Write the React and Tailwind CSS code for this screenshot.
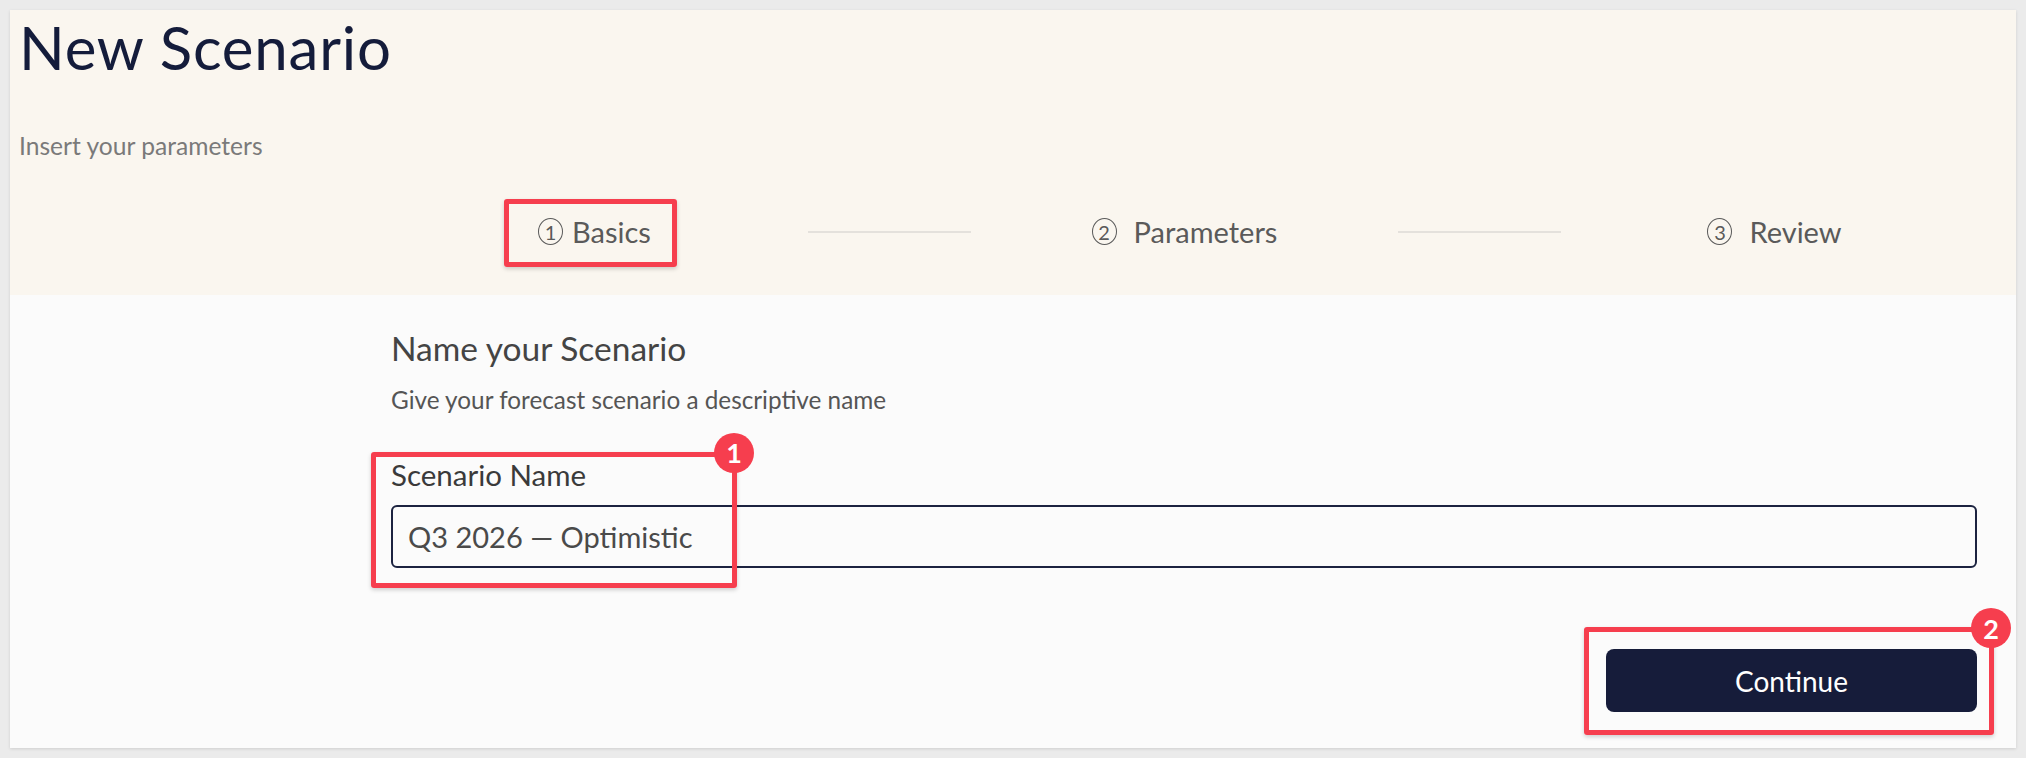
import React, { useState } from 'react';

const steps = [
  { num: '1', label: 'Basics', gap: 'ml-[9px]' },
  { num: '2', label: 'Parameters', gap: 'ml-[17px]' },
  { num: '3', label: 'Review', gap: 'ml-[17px]' },
];

// Red callout frame with an optional numbered badge on its top-right corner
const Callout = ({ className, badge }) => (
  <div className={`pointer-events-none absolute rounded-[3px] border-[5px] border-[#f63e4e] shadow-[0_2px_4px_rgba(0,0,0,0.18)] ${className}`}>
    {badge && (
      <span className="absolute -right-[22px] -top-[24px] flex h-[40px] w-[40px] items-center justify-center rounded-full bg-[#f63e4e] text-[27px] font-bold leading-none text-white">
        {badge}
      </span>
    )}
  </div>
);

// Oval outline around the step number
const StepNumber = ({ num }) => (
  <span className="inline-flex h-[27px] w-[25px] items-center justify-center rounded-[50%] border-[1.5px] border-[#5a5a5a] text-[20px] leading-none">
    {num}
  </span>
);

const Stepper = () => (
  <div className="flex h-[30px] items-center">
    {steps.map((step, i) => (
      <React.Fragment key={step.label}>
        {i > 0 && <div className="mx-2 h-[2px] w-[163px] shrink-0 bg-[#e4e1dc]" />}
        <div className="flex flex-1 justify-center">
          <div className="relative flex items-center text-[29px] leading-none text-[#5a5a5a]">
            <StepNumber num={step.num} />
            <span className={step.gap}>{step.label}</span>
            {i === 0 && <Callout className="-left-[34px] -right-[26px] -top-[18px] -bottom-[21px]" />}
          </div>
        </div>
      </React.Fragment>
    ))}
  </div>
);

export default function App() {
  const [name, setName] = useState('Q3 2026 — Optimistic');

  return (
    <div className="min-h-screen bg-[#ebebeb] p-[10px] font-['Lato',sans-serif]">
      <div className="flex h-[738px] flex-col bg-[#fbfbfb] shadow-[0_1px_3px_rgba(0,0,0,0.12)]">
        <header className="h-[285px] shrink-0 bg-[#faf6ef] px-[9px] pt-[7px]">
          <h1 className="text-[60px] leading-none tracking-[0.8px] text-[#141c3b]">New Scenario</h1>
          <p className="mt-[57px] text-[24.6px] leading-none text-[#7a7a7a]">Insert your parameters</p>
          <div className="ml-[370px] mr-[27px] mt-[58px]">
            <Stepper />
          </div>
        </header>

        <main className="flex flex-1 flex-col pl-[381px] pr-[39px] pt-[37px]">
          <h2 className="text-[33.5px] leading-none text-[#444]">Name your Scenario</h2>
          <p className="mt-[22px] text-[24.3px] leading-none text-[#555]">Give your forecast scenario a descriptive name</p>

          <div className="relative mt-[48px]">
            <label htmlFor="scenario-name" className="block text-[29.5px] leading-none text-[#3a3a3a]">
              Scenario Name
            </label>
            <input
              id="scenario-name"
              value={name}
              onChange={(e) => setName(e.target.value)}
              className="mt-[16px] h-[63px] w-full rounded-[6px] border-2 border-[#1c2340] bg-[#fbfbfb] px-[15px] text-[29px] text-[#4a4a4a] outline-none"
            />
            <Callout badge="1" className="-left-[20px] -top-[8px] h-[136px] w-[366px]" />
          </div>

          <div className="mt-[81px] flex justify-end">
            <div className="relative">
              <button className="h-[63px] w-[371px] rounded-[8px] bg-[#161c3a] text-[28px] text-white">
                Continue
              </button>
              <Callout badge="2" className="-left-[22px] -right-[17px] -top-[22px] -bottom-[23px]" />
            </div>
          </div>
        </main>
      </div>
    </div>
  );
}
